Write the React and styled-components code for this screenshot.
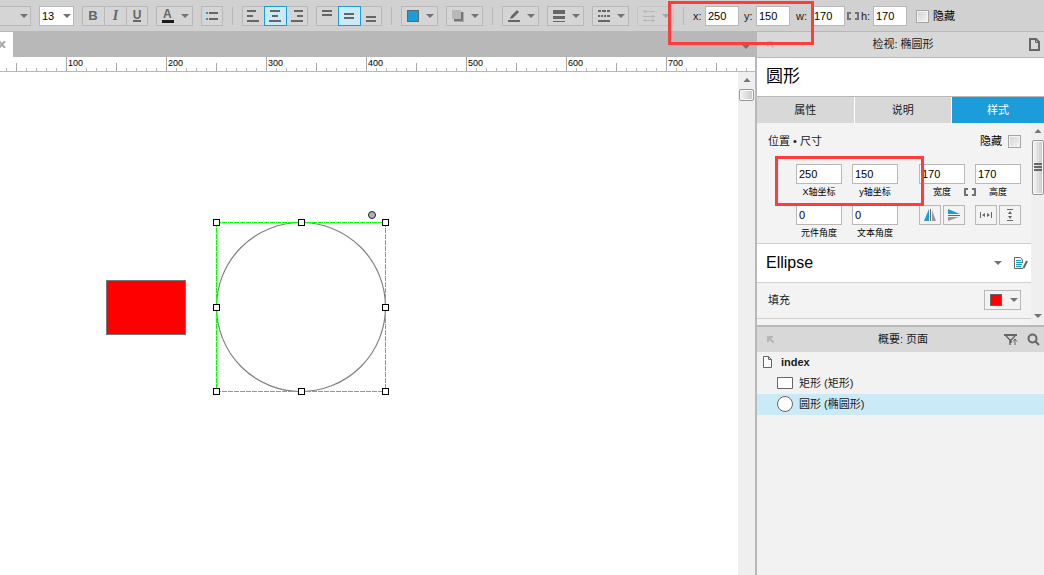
import React from "react";
import styled, { createGlobalStyle, css } from "styled-components";

const c = {
  line: "#b8b8b8",
  bar: "#d1d1d1",
  head: "#d8d8d8",
  panel: "#f3f3f3",
  accent: "#1b9dd9",
  tint: "#cbeaf7",
  ink: "#666666",
};

const GlobalStyle = createGlobalStyle`
  * { box-sizing: border-box; }
  body {
    margin: 0;
    font: 11px/16px "Liberation Sans", "Noto Sans CJK SC", sans-serif;
    color: #1a1a1a;
    background: #fff;
  }
  button, input, select { font: inherit; color: inherit; margin: 0; border-radius: 0; }
  button { padding: 0; background: none; border: 0; }
  h1, h2, h3, ul { margin: 0; padding: 0; font: inherit; }
  svg { display: block; flex: none; }
`;

const Page = styled.div`
  display: flex;
  flex-direction: column;
  min-height: 100vh;
  overflow: hidden;
`;

const Toolbar = styled.header`
  display: flex;
  align-items: center;
  gap: 8px;
  height: 32px;
  padding-top: 1px;
  background: ${c.bar};
  border-bottom: 1px solid ${c.line};
  white-space: nowrap;
`;

const Group = styled.div`
  display: flex;
  flex: none;
  height: 20px;
  border: 1px solid ${c.line};
  opacity: ${(p) => (p.$dim ? 0.45 : 1)};
  background: #d5d5d5;
`;

const Tool = styled.button`
  display: flex;
  align-items: center;
  justify-content: ${(p) => (p.$menu ? "space-between" : "center")};
  width: ${(p) => (p.$menu ? 35 : p.$single ? 20 : 22)}px;
  height: 18px;
  padding: ${(p) => (p.$menu ? "0 3px 0 5px" : "0")};
  color: ${c.ink};
  & + & { border-left: 1px solid ${c.line}; }
  &:first-child:not(:only-child) { width: 21px; padding-right: 1px; }
  &:last-child:not(:only-child) { width: 21px; }
  ${(p) =>
    p.$active &&
    css`
      &&& {
        position: relative;
        width: 23px;
        height: 20px;
        margin: -1px -1px -1px 0;
        padding-right: 1px;
        background: ${c.tint};
        border: 1px solid ${c.accent};
      }
    `}
`;

const Letter = styled.span`
  font-family: ${(p) => (p.$serif ? `"Liberation Serif", serif` : "inherit")};
  font-size: ${(p) => p.$size}px;
  font-style: ${(p) => (p.$serif ? "italic" : "normal")};
  font-weight: 700;
  line-height: ${(p) => (p.$bar ? 10 : 16)}px;
  border-bottom: ${(p) => (p.$bar ? `${p.$bar}px solid ${p.$barColor}` : "0")};
  padding: ${(p) => (p.$bar === 3 ? "0 2px 1px 1px" : "0")};
`;

const Divider = styled.span`
  flex: none;
  width: 1px;
  height: 18px;
  margin: 0 1px;
  background: ${c.line};
`;

const SelectBox = styled.span`
  display: flex;
  align-items: center;
  flex: none;
  width: ${(p) => p.$w}px;
  height: 20px;
  padding-right: 2px;
  background: ${(p) => (p.$plain ? "#d5d5d5" : "#fff")};
  border: 1px solid ${c.line};
  border-left-width: ${(p) => (p.$plain ? 0 : 1)}px;
  select {
    appearance: none;
    flex: 1;
    min-width: 0;
    height: 18px;
    padding: 0 0 0 2px;
    border: 0;
    background: transparent;
    color: #000;
  }
`;

const Coordinates = styled.div`
  position: relative;
  display: flex;
  align-items: center;
  flex: none;
`;

const Coord = styled.label`
  display: flex;
  align-items: center;
  justify-content: space-between;
  width: ${(p) => p.$w}px;
  margin-right: ${(p) => p.$after}px;
  svg + & { margin-left: 2px; }
`;

const Field = styled.input`
  width: ${(p) => p.$w}px;
  height: 20px;
  padding: 0 2px;
  border: 1px solid ${c.line};
  background: #fff;
  color: #000;
`;

const Check = styled.label`
  display: flex;
  align-items: center;
  flex-direction: ${(p) => (p.$reverse ? "row-reverse" : "row")};
  gap: ${(p) => (p.$reverse ? 6 : 4)}px;
  color: #000;
  input {
    appearance: none;
    width: 13px;
    height: 13px;
    margin: 0;
    border: 1px solid #a5a5a5;
    background: linear-gradient(135deg, #cfd2d6, #f5f5f5);
    box-shadow: inset 0 0 0 1px #f4f4f4;
  }
`;

const Marker = styled.span`
  position: absolute;
  z-index: 2;
  left: ${(p) => p.$x}px;
  top: ${(p) => p.$y}px;
  width: ${(p) => p.$w}px;
  height: ${(p) => p.$h}px;
  border: 3px solid #ff3b3b;
  pointer-events: none;
`;

const Main = styled.div`
  display: flex;
  flex: 1;
`;

const Editor = styled.main`
  display: flex;
  flex-direction: column;
  flex: 1;
  min-width: 0;
`;

const TabStrip = styled.div`
  display: flex;
  align-items: stretch;
  justify-content: space-between;
  height: 25px;
  padding-right: 5px;
  background: ${c.line};
`;

const PageTab = styled.button`
  display: flex;
  align-items: center;
  width: 13px;
  background: #fff;
`;

const TabMenu = styled.button`
  display: flex;
  align-items: center;
  padding-top: 5px;
`;

const Ruler = styled.div`
  display: flex;
  height: 15px;
  overflow: hidden;
  border-bottom: 1px solid ${c.line};
`;

const RulerCell = styled.span`
  flex: none;
  width: 100px;
  height: 14px;
  padding-left: 2px;
  font-size: 9px;
  line-height: 12px;
  color: #000;
  background:
    linear-gradient(#aaa, #aaa) 0 0 / 1px 14px no-repeat,
    linear-gradient(#aaa, #aaa) 50px 6px / 1px 8px no-repeat,
    repeating-linear-gradient(90deg, ${c.line} 0 1px, transparent 1px 10px) 0 11px / 100px 3px no-repeat;
  &:first-child { margin-left: -34px; }
`;

const Work = styled.div`
  display: flex;
  flex: 1;
`;

const Canvas = styled.div`
  position: relative;
  flex: 1;
  overflow: hidden;
  background: #fff;
`;

const Shape = styled.div`
  position: absolute;
  left: ${(p) => p.$x - 34}px;
  top: ${(p) => p.$y}px;
`;

const RedBox = styled.div`
  width: 80px;
  height: 55px;
  background: #f00;
  border: 1px solid #777;
`;

const ScrollTrack = styled.div`
  display: flex;
  flex-direction: column;
  align-items: center;
  flex: none;
  width: ${(p) => p.$w}px;
  padding: ${(p) => p.$pad};
  background: #efefef;
`;

const Thumb = styled.span`
  display: flex;
  align-items: center;
  justify-content: center;
  width: ${(p) => p.$w}px;
  height: ${(p) => p.$h}px;
  margin-top: ${(p) => p.$gap}px;
  border: 1px solid #979797;
  border-radius: 2px;
  background: linear-gradient(90deg, #f5f5f5, #c8c8cb);
  box-shadow: inset 0 0 0 1px #f8f8f8;
`;

const Spring = styled.span`
  flex: 1;
`;

const Sidebar = styled.aside`
  display: flex;
  flex-direction: column;
  flex: none;
  width: 289px;
  border-left: 2px solid ${c.line};
  background: #f2f2f2;
`;

const PanelHead = styled.div`
  display: grid;
  grid-template-columns: 40px 1fr 40px;
  align-items: center;
  height: 25px;
  padding: 0 4px 1px 9px;
  background: ${c.head};
  h2 { text-align: center; }
`;

const HeadActions = styled.div`
  display: flex;
  align-items: center;
  justify-content: flex-end;
  gap: 9px;
`;

const ShapeName = styled.h1`
  height: 40px;
  padding-left: 9px;
  background: #fff;
  border: solid ${c.line};
  border-width: 1px 0;
  font-size: 17px;
  line-height: 38px;
  color: #000;
`;

const Tabs = styled.div`
  display: flex;
  height: 26px;
`;

const Tab = styled.button`
  flex: ${(p) => (p.$active ? "1" : "0 0 34%")};
  border-right: ${(p) => (p.$active ? 0 : 1)}px solid #fff;
  background: ${(p) => (p.$active ? c.accent : c.head)};
  color: ${(p) => (p.$active ? "#fff" : "#1a1a1a")};
`;

const Inspector = styled.div`
  display: flex;
  border-bottom: 2px solid ${c.line};
`;

const Properties = styled.div`
  flex: 1;
  min-width: 0;
  background: ${c.panel};
`;

const Geometry = styled.section`
  position: relative;
  height: 121px;
  padding: 10px 10px 0 11px;
  border-bottom: 1px solid #d0d0d0;
`;

const SectionTitle = styled.div`
  display: flex;
  align-items: center;
  justify-content: space-between;
`;

const FieldRow = styled.div`
  display: flex;
  justify-content: flex-end;
  gap: 10px;
  margin-top: ${(p) => p.$top}px;
  > :nth-child(3) { margin-left: 11px; }
`;

const Captioned = styled.label`
  display: flex;
  flex-direction: column;
  align-items: center;
  width: 46px;
  font-size: 9px;
  line-height: 16px;
  color: #000;
  input { font-size: 11px; }
`;

const Link = styled.span`
  display: flex;
  align-items: flex-end;
  width: 12px;
  height: 32px;
  margin: 0 -11px;
`;

const ButtonPair = styled.div`
  display: flex;
  gap: 2px;
  width: 46px;
`;

const IconButton = styled.button`
  display: flex;
  align-items: center;
  justify-content: center;
  width: 22px;
  height: 20px;
  border: 1px solid ${c.line};
`;

const StyleRow = styled.section`
  display: flex;
  align-items: center;
  height: 39px;
  padding: 0 3px 0 9px;
  gap: 12px;
  background: #fff;
  border-bottom: 1px solid #d0d0d0;
  h3 { flex: 1; font-size: 16px; color: #000; }
`;

const FillRow = styled.section`
  display: flex;
  align-items: center;
  justify-content: space-between;
  height: 36px;
  margin-bottom: 6px;
  padding: 0 10px 1px 11px;
  border-bottom: 1px solid #d0d0d0;
`;

const FillButton = styled.button`
  display: flex;
  align-items: center;
  justify-content: space-between;
  width: 37px;
  height: 20px;
  padding: 0 2px 0 5px;
  border: 1px solid ${c.line};
`;

const Swatch = styled.span`
  width: 12px;
  height: 12px;
  border: 1px solid ${c.ink};
  background: ${(p) => p.$color};
`;

const Outline = styled.ul`
  list-style: none;
`;

const OutlineItem = styled.li`
  display: flex;
  align-items: center;
  gap: ${(p) => (p.$root ? 8 : 6)}px;
  height: 21px;
  padding: 0 0 1px ${(p) => (p.$root ? 5 : 20)}px;
  font-weight: ${(p) => (p.$root ? 700 : 400)};
  background: ${(p) => (p.$selected ? c.tint : "transparent")};
`;

const Caret = ({ up }) => (
  <svg width="8" height="4" viewBox="0 0 8 4" fill="#737373">
    <path d={up ? "M0.5 4h7L4 0z" : "M0 0h8L4 4z"} />
  </svg>
);

const Bars = ({ rows }) => (
  <svg width="12" height="12" viewBox="0 0 12 12" fill={c.ink}>
    {rows.map(([x, y, w]) => (
      <rect key={y} x={x} y={y} width={w} height="2" />
    ))}
  </svg>
);

const Cursor = ({ color = "#b5b5b5" }) => (
  <svg width="9" height="9" viewBox="0 0 9 9" fill="none" stroke={color} strokeWidth="2">
    <path d="M2 7V2h5M2 2l5.500 5.500" />
  </svg>
);

const Brackets = () => (
  <svg width="12" height="8" viewBox="0 0 12 8" fill="none" stroke="#737373" strokeWidth="2">
    <path d="M4 1H1v6h3M8 1h3v6H8" />
  </svg>
);

const PageIcon = ({ bold }) =>
  bold ? (
    <svg width="11" height="13" viewBox="0 0 11 13" fill="none" stroke={c.ink} strokeWidth="2">
      <path d="M1 1h6l3 3v8H1z" />
      <path d="M6.500 1v3.500H10" strokeWidth="1" />
    </svg>
  ) : (
    <svg width="11" height="12" viewBox="0 0 11 12" fill="#fff" stroke={c.ink}>
      <path d="M1.500 .5h5l3 3v8h-8zM6.500 .5v3h3" />
    </svg>
  );

const handles = [[0, 0], [85, 0], [169, 0], [0, 85], [169, 85], [0, 169], [85, 169], [169, 169]];

const SelectedEllipse = () => (
  <svg width="180" height="190" viewBox="-4 -13 180 190" fill="none">
    <circle cx="85" cy="85" r="84.500" stroke="#808080" strokeWidth="1.200" />
    <path d="M0 .5H170M.5 0V170M169.500 0V170M0 169.500H170" stroke="#0f0" strokeDasharray="5 1" />
    {handles.map(([x, y]) => (
      <rect key={`${x}-${y}`} x={x - 2.5} y={y - 2.5} width="6" height="6" fill="#fff" stroke="#000" />
    ))}
    <circle cx="156" cy="-7" r="3.500" fill="#b0b0b0" stroke="#222" />
  </svg>
);

export default function App() {
  return (
    <Page>
      <GlobalStyle />
      <Toolbar>
        <SelectBox $w={31} $plain>
          <select aria-label="Font"><option> </option></select>
          <Caret />
        </SelectBox>
        <SelectBox $w={35}>
          <select aria-label="Font size" defaultValue="13"><option>13</option></select>
          <Caret />
        </SelectBox>
        <Group>
          <Tool aria-label="Bold"><Letter $size={13}>B</Letter></Tool>
          <Tool aria-label="Italic"><Letter $size={14} $serif>I</Letter></Tool>
          <Tool aria-label="Underline"><Letter $size={12} $bar={2} $barColor={c.ink}>U</Letter></Tool>
        </Group>
        <Group>
          <Tool $menu aria-label="Text color">
            <Letter $size={12} $bar={3} $barColor="#1a1a1a">A</Letter>
            <Caret />
          </Tool>
        </Group>
        <Group>
          <Tool $single aria-label="Bullets">
            <svg width="12" height="8" viewBox="0 0 12 8">
              <path d="M0 0h2v2H0zM0 6h2v2H0z" fill={c.accent} /><path d="M3 0h9v2H3zM3 6h9v2H3z" fill={c.ink} />
            </svg>
          </Tool>
        </Group>
        <Divider />
        <Group>
          <Tool aria-label="Align left"><Bars rows={[[0, 0, 9], [0, 5, 6], [0, 10, 12]]} /></Tool>
          <Tool $active aria-label="Align center"><Bars rows={[[1, 0, 10], [3, 5, 6], [0, 10, 12]]} /></Tool>
          <Tool aria-label="Align right"><Bars rows={[[3, 0, 9], [6, 5, 6], [0, 10, 12]]} /></Tool>
        </Group>
        <Group>
          <Tool aria-label="Align top"><Bars rows={[[1, 0, 10], [1, 4, 10]]} /></Tool>
          <Tool $active aria-label="Align middle"><Bars rows={[[1, 3, 10], [1, 7, 10]]} /></Tool>
          <Tool aria-label="Align bottom"><Bars rows={[[1, 6, 10], [1, 10, 10]]} /></Tool>
        </Group>
        <Divider />
        <Group>
          <Tool $menu aria-label="Fill color"><Swatch $color={c.accent} /><Caret /></Tool>
        </Group>
        <Group>
          <Tool $menu aria-label="Shadow">
            <svg width="12" height="12" viewBox="0 0 12 12">
              <path d="M2 2h10v10H2z" fill="#a8a8a8" /><path d="M2 2h9v9H2z" fill="#777" /><path d="M0 0h9v9H0z" fill="#b8b8b8" />
            </svg>
            <Caret />
          </Tool>
        </Group>
        <Divider />
        <Group>
          <Tool $menu aria-label="Line color">
            <svg width="12" height="12" viewBox="0 0 12 12" fill={c.ink}>
              <path d="M0 10h12v2H0zM2 9l1-3 6-6 2 2-6 6z" />
            </svg>
            <Caret />
          </Tool>
        </Group>
        <Group>
          <Tool $menu aria-label="Line width">
            <svg width="12" height="12" viewBox="0 0 12 12" fill={c.ink}><path d="M0 0h12v4H0zM0 6h12v3H0zM0 11h12v1H0z" /></svg>
            <Caret />
          </Tool>
        </Group>
        <Group>
          <Tool $menu aria-label="Line style">
            <svg width="12" height="12" viewBox="0 0 12 12" fill={c.ink}>
              <path d="M0 0h3v2H0zM4 0h4v2H4zM9 0h3v2H9zM0 5h2v2H0zM3 5h2v2H3zM6 5h2v2H6zM9 5h3v2H9zM0 10h12v2H0z" />
            </svg>
            <Caret />
          </Tool>
        </Group>
        <Group $dim>
          <Tool $menu aria-label="Arrow style">
            <svg width="12" height="12" viewBox="0 0 12 12" fill="none" stroke="#999">
              <path d="M0 1.500h12M0 6.500h12M0 10.500h12M3 0L1 1.500 3 3M9 5l2 1.500L9 8M3 9l-2 1.500L3 12M9 9l2 1.500L9 12" />
            </svg>
            <Caret />
          </Tool>
        </Group>
        <Divider />
        <Coordinates>
          <Coord $w={46} $after={5}>x:<Field $w={34} defaultValue="250" /></Coord>
          <Coord $w={46} $after={6}>y:<Field $w={34} defaultValue="150" /></Coord>
          <Coord $w={49} $after={2}>w:<Field $w={34} defaultValue="170" /></Coord>
          <Brackets />
          <Coord $w={46} $after={9}>h:<Field $w={34} defaultValue="170" /></Coord>
          <Check><input type="checkbox" />隐藏</Check>
          <Marker $x={-25} $y={-5} $w={146} $h={44} />
        </Coordinates>
      </Toolbar>
      <Main>
        <Editor>
          <TabStrip>
            <PageTab aria-label="Close page">
              <svg width="6" height="7" viewBox="0 0 6 7" stroke="#aaa" strokeWidth="2"><path d="M-1 0l6 7M5 0l-6 7" /></svg>
            </PageTab>
            <TabMenu aria-label="Open pages"><Caret /></TabMenu>
          </TabStrip>
          <Ruler>
            {[0, 100, 200, 300, 400, 500, 600, 700].map((n) => (
              <RulerCell key={n}>{n || ""}</RulerCell>
            ))}
          </Ruler>
          <Work>
            <Canvas>
              <Shape $x={140} $y={208}><RedBox /></Shape>
              <Shape $x={246} $y={137}><SelectedEllipse /></Shape>
            </Canvas>
            <ScrollTrack $w={17} $pad="6px 0">
              <Caret up />
              <Thumb $w={15} $h={12} $gap={7} />
            </ScrollTrack>
          </Work>
        </Editor>
        <Sidebar>
          <PanelHead>
            <Cursor color="#c2c2c2" />
            <h2>检视: 椭圆形</h2>
            <HeadActions><PageIcon bold /></HeadActions>
          </PanelHead>
          <ShapeName>圆形</ShapeName>
          <Tabs>
            <Tab>属性</Tab>
            <Tab>说明</Tab>
            <Tab $active>样式</Tab>
          </Tabs>
          <Inspector>
            <Properties>
              <Geometry>
                <SectionTitle>
                  位置 • 尺寸
                  <Check $reverse><input type="checkbox" />隐藏</Check>
                </SectionTitle>
                <FieldRow $top={15}>
                  <Captioned><Field $w={46} defaultValue="250" />X轴坐标</Captioned>
                  <Captioned><Field $w={46} defaultValue="150" />y轴坐标</Captioned>
                  <Captioned><Field $w={46} defaultValue="170" />宽度</Captioned>
                  <Link><Brackets /></Link>
                  <Captioned><Field $w={46} defaultValue="170" />高度</Captioned>
                </FieldRow>
                <FieldRow $top={5}>
                  <Captioned><Field $w={46} defaultValue="0" />元件角度</Captioned>
                  <Captioned><Field $w={46} defaultValue="0" />文本角度</Captioned>
                  <ButtonPair>
                    <IconButton aria-label="Flip horizontal">
                      <svg width="12" height="12" viewBox="0 0 12 12">
                        <path d="M5 0v12H0z" fill={c.accent} /><path d="M6 0h1v12H6z" fill={c.ink} /><path d="M8 1v11h4z" fill="#999" />
                      </svg>
                    </IconButton>
                    <IconButton aria-label="Flip vertical">
                      <svg width="12" height="12" viewBox="0 0 12 12">
                        <path d="M0 0v5h12z" fill={c.accent} /><path d="M0 6h12v1H0z" fill={c.ink} /><path d="M0 8h11L0 12z" fill="#999" />
                      </svg>
                    </IconButton>
                  </ButtonPair>
                  <ButtonPair>
                    <IconButton aria-label="Fit width">
                      <svg width="12" height="6" viewBox="0 0 12 6" fill={c.ink}>
                        <path d="M0 0h1v6H0zM11 0h1v6h-1zM2 3l3-2v4zM10 3L7 1v4z" />
                      </svg>
                    </IconButton>
                    <IconButton aria-label="Fit height">
                      <svg width="6" height="12" viewBox="0 0 6 12" fill={c.ink}>
                        <path d="M0 0h6v1H0zM0 11h6v1H0zM3 2L1 5h4zM3 10L1 7h4z" />
                      </svg>
                    </IconButton>
                  </ButtonPair>
                </FieldRow>
                <Marker $x={18} $y={33} $w={149} $h={50} />
              </Geometry>
              <StyleRow>
                <h3>Ellipse</h3>
                <button aria-label="Choose style"><Caret /></button>
                <button aria-label="Edit style">
                  <svg width="14" height="12" viewBox="0 0 14 12" fill="none">
                    <path d="M9 11.500H.5V.5h6l2 2.500v3" stroke={c.ink} />
                    <path d="M2 3.500h5M2 5.500h6M2 7.500h6M2 9.500h5" stroke={c.accent} />
                    <path d="M13 4l-3.500 7" stroke={c.ink} strokeWidth="2" />
                  </svg>
                </button>
              </StyleRow>
              <FillRow>
                填充
                <FillButton aria-label="填充"><Swatch $color="#f00" /><Caret /></FillButton>
              </FillRow>
            </Properties>
            <ScrollTrack $w={13} $pad="6px 0 7px">
              <Caret up />
              <Thumb $w={12} $h={55} $gap={7}>
                <svg width="8" height="9" viewBox="0 0 8 9" fill={c.ink}><path d="M0 0h8v2H0zM0 3h8v2H0zM0 6h8v2H0z" /></svg>
              </Thumb>
              <Spring />
              <Caret />
            </ScrollTrack>
          </Inspector>
          <PanelHead>
            <Cursor />
            <h2>概要: 页面</h2>
            <HeadActions>
              <svg width="14" height="11" viewBox="0 0 14 11" fill="none" stroke={c.ink}>
                <path d="M0 1h13" strokeWidth="2" /><path d="M2 2l4 4v5M11 2L7 6v3" strokeWidth="1.500" /><path d="M11 11V5M9 7.500L11 5l2 2.500" />
              </svg>
              <svg width="13" height="13" viewBox="0 0 13 13" fill="none" stroke={c.ink} strokeWidth="2">
                <circle cx="5.500" cy="5.500" r="4" /><path d="M8.500 8.500l3.500 3.500" />
              </svg>
            </HeadActions>
          </PanelHead>
          <Outline>
            <OutlineItem $root><PageIcon />index</OutlineItem>
            <OutlineItem>
              <svg width="16" height="12" viewBox="0 0 16 12" fill="#fff" stroke={c.ink}><path d="M.5.5h15v11H.5z" /></svg>
              矩形 (矩形)
            </OutlineItem>
            <OutlineItem $selected>
              <svg width="16" height="16" viewBox="0 0 16 16" fill="#fff" stroke={c.ink}><circle cx="8" cy="8" r="7.500" /></svg>
              圆形 (椭圆形)
            </OutlineItem>
          </Outline>
        </Sidebar>
      </Main>
    </Page>
  );
}
